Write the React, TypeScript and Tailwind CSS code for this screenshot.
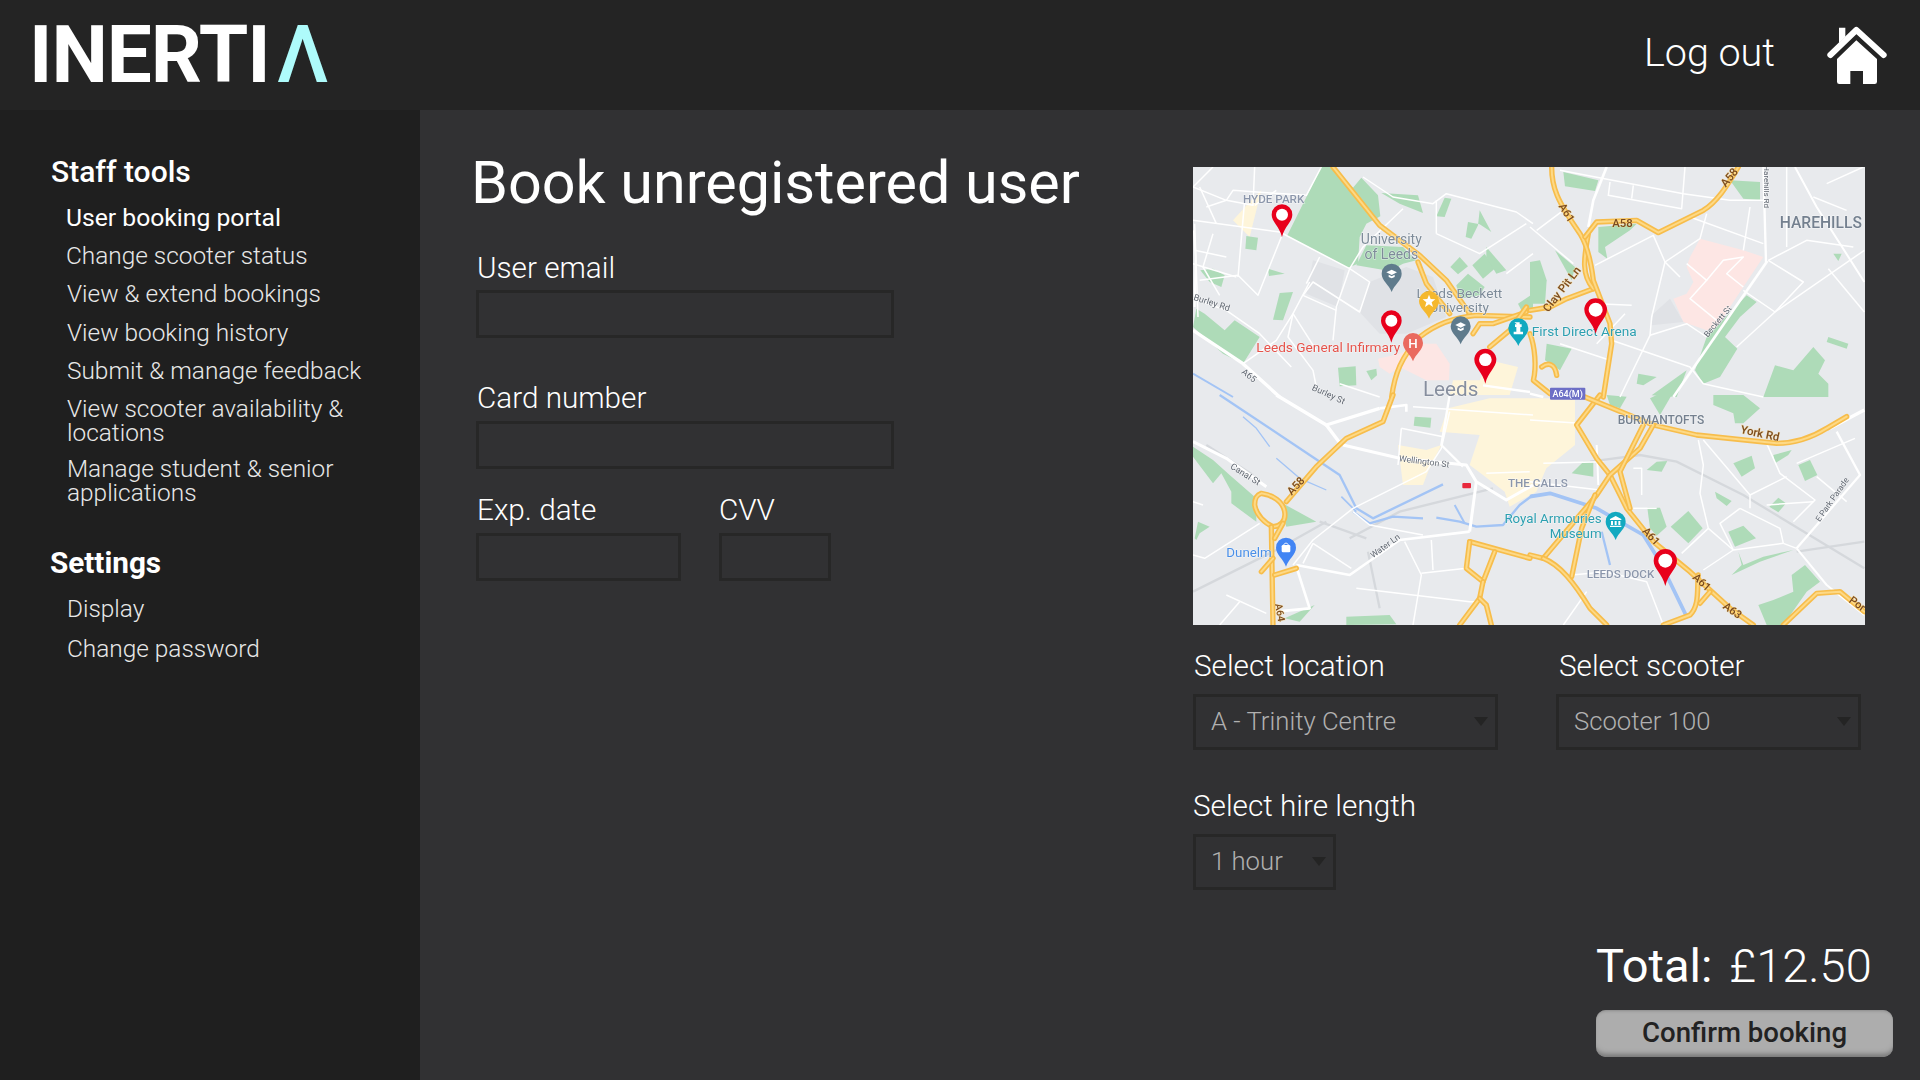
import React from "react";

const Q: Record<number, string> = {
  1: "translate(0 0)",
  2: "translate(1011 0)",
  3: "translate(0 684)",
  4: "translate(1011 684)",
};

const parks: Record<number, string[]> = {
  1: [
    "385,0 420,0 480,62 505,32 555,85 562,148 520,170 500,210 495,290 465,302 282,207",
    "565,78 675,85 690,138 620,110",
    "755,92 775,95 755,150 730,148",
    "860,130 895,195 860,172 825,165 818,210 835,215 855,175",
    "520,235 630,240 670,280 630,290 590,312 490,295",
    "160,207 195,212 190,250 157,245",
    "225,305 275,320 228,327",
    "22,310 60,305 95,325 85,360 50,345",
    "260,378 300,375 270,460 240,458",
    "0,480 10,425 35,440 95,490 125,460 200,510 150,590 90,560",
    "435,602 488,598 490,655 440,658",
    "520,612 550,605 552,625 535,640",
    "772,300 800,270 825,298 795,322",
    "838,295 875,260 905,305 870,335",
    "880,240 940,310 910,320 880,270",
    "790,355 825,320 875,360 860,385 800,395",
    "975,410 1020,380 1020,425 985,430",
  ],
  2: [
    "100,15 205,40 195,72 105,58",
    "600,40 690,45 690,100 640,95",
    "205,180 320,170 300,190 225,240 232,275 205,255",
    "75,250 135,300 125,340",
    "0,285 30,280 50,340 45,410 0,410",
    "50,530 125,545 90,610 45,580",
    "910,260 935,260 925,282",
    "895,510 955,530 950,545 890,525",
    "650,385 680,405 630,450 585,510 622,545 570,630 520,650 495,610 530,510",
    "735,595 790,610 850,540 885,580 865,620 895,650 895,690 700,690",
    "325,620 380,630 340,655 320,650",
    "365,685 470,610 440,690",
  ],
  3: [
    "0,155 60,195 110,240 190,310 190,380 115,325 115,290 85,235 60,265 0,185",
    "260,320 370,380 280,395",
    "5,430 15,380 50,395 20,415 10,435",
    "665,65 715,68 712,98 662,92",
    "460,690 460,665 590,660 610,688",
    "275,670 365,630 320,680",
  ],
  4: [
    "550,0 640,0 690,40 640,85 615,85 610,55 550,30",
    "230,0 290,5 270,40 240,30",
    "380,0 425,0 390,60 360,10",
    "730,180 785,165 775,180 735,205",
    "610,205 665,182 675,220 635,245",
    "805,210 840,195 862,240 825,258",
    "380,200 412,198 395,230 350,225",
    "125,235 160,200 190,200 190,245",
    "555,290 605,318 590,333 560,310",
    "718,335 745,308 768,325 745,352",
    "595,410 640,392 678,430 615,455",
    "352,338 390,338 410,395 380,422 360,400",
    "422,395 475,348 518,400 475,445",
    "625,470 640,510 700,485 790,465 690,500 605,540 635,510",
    "685,630 730,615 790,590 785,540 825,510 870,560 830,590 760,690 710,690",
  ],
};

const thin: Record<number, string[]> = {
  1: [
    "M0 60L60 0", "M0 60L100 100L180 115L185 0", "M100 100L120 70L340 85L385 0", "M20 60L70 170",
    "M0 160L260 195L470 305L530 345L500 435L360 345L330 385L430 430", "M265 210L195 385L135 325L20 340",
    "M60 200L30 300L80 385", "M5 250L100 270", "M0 290L130 330", "M155 100L135 330",
    "M510 30L600 90L720 110L760 80L970 135L1020 170", "M630 125L510 240L470 305", "M470 305L430 420L420 520",
    "M350 345L300 440L285 510L360 610L370 660", "M300 440L370 550", "M730 200L730 100", "M730 200L860 260L1000 170",
    "M940 320L1020 260", "M150 590L250 520L300 440", "M0 395L100 430L200 500L295 600", "M440 650L560 690",
    "M380 270L340 350", "M40 120L100 100", "M185 115L250 70", "M5 170L15 450",
  ],
  2: [
    "M20 190L100 130", "M0 180L130 290", "M240 45L235 85L455 125L465 0", "M310 55L305 95", "M90 10L460 80L600 100L700 100",
    "M660 120L640 250", "M480 150L700 230", "M530 140L510 215L405 285L365 450L360 505L270 690", "M195 295L370 205L405 285L450 330",
    "M200 410L305 415", "M285 440L200 530", "M360 505L470 470L530 510", "M470 290L530 340L480 395L560 460",
    "M530 340L580 280L640 270L590 320L640 360", "M715 280L830 220L970 240", "M715 280L820 345L735 435L640 370",
    "M735 435L1003 250", "M895 305L1003 435", "M770 0L770 240", "M890 50L1000 0", "M850 90L950 130", "M620 540L735 435",
    "M245 520L480 600L520 650L700 690", "M90 530L240 580",
  ],
  3: [
    "M770 50L745 160L700 230L480 340L360 435L300 510", "M100 600L220 655", "M140 620L80 690", "M360 445L475 520", "M360 445L330 505",
    "M490 580L830 620L850 620", "M635 440L685 540L660 690", "M715 435L720 525", "M685 535L820 520", "M625 100L615 210", "M625 100L750 125",
    "M660 35L1020 60", "M880 235L1010 230", "M0 480L35 490L200 385", "M0 320L30 330", "M480 350L530 390L690 420",
  ],
  4: [
    "M505 135L520 210L510 295L535 400L610 465", "M520 135L660 300L660 340", "M710 145L750 235L855 315L790 380", "M660 300L770 245",
    "M850 320L710 330", "M535 400L455 475", "M520 525L610 465L760 445", "M630 340L570 385L610 465", "M630 340L750 400L760 445",
    "M800 460L760 445", "M800 205L975 130", "M860 245L950 320", "M0 75L150 85", "M40 205L220 200", "M0 260L210 285",
    "M310 340L380 340", "M310 220L335 220L335 300", "M225 530L350 560L400 690", "M125 540L230 530", "M100 690L170 590",
  ],
};

const major: [number, string, number][] = [
  [1, "M0 490L150 590L260 690", 10],
  [1, "M3 190L8 270L5 420", 6],
  [1, "M870 655L1011 675", 7],
  [2, "M0 680L40 690", 7],
  [2, "M230 0L190 100L175 180", 8],
  [2, "M700 0L708 285", 7],
  [2, "M712 282L430 690", 8],
  [2, "M795 0L860 120L1003 345", 6],
  [3, "M0 140L100 190L220 275", 9],
  [3, "M250 0L400 90L560 40", 10],
  [3, "M450 150L620 190L820 210L850 260L940 315L1020 270", 9],
  [3, "M850 260L830 410", 9],
  [3, "M830 410L620 435L470 540L310 510", 8],
  [3, "M310 515L350 640L250 650", 8],
  [3, "M400 90L445 150", 10],
  [3, "M560 40L640 30L640 50", 8],
  [3, "M770 0L745 150L810 215", 7],
  [4, "M800 460L990 240L920 110", 7],
  [4, "M800 460L890 570L1003 660", 6],
  [4, "M900 100L1003 45", 10],
  [4, "M200 150L205 270", 6],
];

const yellow: [number, string][] = [
  [1, "M420 0L560 175L680 265L760 340L830 440"],
  [1, "M675 285L700 350L770 440"],
  [1, "M596 690C605 620 625 570 680 510C730 470 790 450 850 445L1011 450"],
  [1, "M840 500L860 470L900 470L1000 435"],
  [2, "M0 430L60 420L110 395L190 365"],
  [2, "M190 365C150 320 165 260 175 200"],
  [2, "M65 0C65 60 80 100 150 200C175 240 185 300 190 340L240 470L245 530L220 690"],
  [2, "M165 210L200 165L320 160L385 197L520 130C560 105 590 60 625 0"],
  [2, "M0 500C15 540 20 600 10 640L60 680"],
  [2, "M35 600C55 585 75 590 80 625"],
  [1, "M890 540L950 490L1000 420"],
  [4, "M210 0L140 90L200 190L240 240L290 340L370 440L480 530L600 640L670 690"],
  [4, "M150 0L370 90L500 120L740 145C800 145 850 125 890 100L950 65"],
  [4, "M370 90L330 160L240 240L200 300L40 490L0 480"],
  [4, "M125 545L155 400L195 300"],
  [4, "M340 90L270 230L300 340"],
  [4, "M40 490C90 510 130 560 180 640L230 690"],
  [4, "M505 540C500 580 510 630 480 660L400 690"],
  [4, "M540 590L510 625"],
  [4, "M760 690L860 595L930 590L1003 650"],
  [3, "M600 0L570 80L460 130L370 215L280 320"],
  [3, "M205 295C240 300 270 320 275 350C280 380 260 395 240 395C215 385 190 360 185 330C185 310 190 300 205 295Z"],
  [3, "M235 395L240 690"],
  [3, "M270 385L245 430"],
  [3, "M205 530L240 490"],
  [3, "M245 540L310 520"],
  [3, "M830 440L1011 490"],
  [3, "M830 440L820 520L870 560L905 470"],
  [3, "M870 560L860 610L800 690"],
  [3, "M860 610L880 630L895 690"],
];

const water: [number, string, number][] = [
  [3, "M80 0L350 180L440 240L490 340L540 370L750 268", 7],
  [3, "M480 350L530 385L600 365L690 370M730 368L800 380L850 395L930 390L980 330L1020 300", 7],
  [3, "M785 330L815 385", 6],
  [3, "M150 65L190 100L230 155", 4],
  [3, "M250 190L320 250L400 285", 4],
  [3, "M445 305L490 350", 5],
  [1, "M0 620L120 690", 6],
  [4, "M0 305L60 295L200 340L340 420L390 500L470 665", 11],
  [4, "M215 410L240 510", 7],
];

const rail: [number, string][] = [
  [4, "M180 200L330 180L440 200L640 300L1003 520"],
  [3, "M470 430L620 350L900 280"],
  [3, "M0 590L240 470L400 380"],
  [3, "M380 380L520 430"],
  [3, "M525 470L560 640"],
  [3, "M40 150L180 240"],
  [4, "M1003 440L800 470"],
];

function Label({ x, y, t, s, c, r = 0, w = 400, a = "start", halo = "#ffffff" }: { x: number; y: number; t: string; s: number; c: string; r?: number; w?: number; a?: "start" | "middle" | "end"; halo?: string }) {
  return (
    <text
      x={x}
      y={y}
      fontSize={s}
      fill={c}
      fontWeight={w}
      textAnchor={a}
      transform={r ? `rotate(${r} ${x} ${y})` : undefined}
      stroke={halo}
      strokeOpacity={0.6}
      strokeWidth={3}
      paintOrder="stroke"
    >
      {t}
    </text>
  );
}

function pinPath(cx: number, cy: number, r: number, tip: number) {
  return `M${cx} ${tip}C${cx - r * 0.25} ${cy + r * 1.1} ${cx - r} ${cy + r * 0.7} ${cx - r} ${cy}A${r} ${r} 0 1 1 ${cx + r} ${cy}C${cx + r} ${cy + r * 0.7} ${cx + r * 0.25} ${cy + r * 1.1} ${cx} ${tip}Z`;
}

function Red({ x, y, r, tip, d }: { x: number; y: number; r: number; tip: number; d: number }) {
  return (
    <g>
      <path d={pinPath(x, y, r, tip)} fill="#e8001c" />
      <circle cx={x} cy={y} r={d} fill="#ffffff" />
    </g>
  );
}

function Poi({ x, y, tip, c, children }: { x: number; y: number; tip: number; c: string; children?: React.ReactNode }) {
  return (
    <g>
      <path d={pinPath(x, y, 30, tip)} fill={c} />
      {children}
    </g>
  );
}

function School({ x, y }: { x: number; y: number }) {
  return (
    <g fill="#ffffff">
      <path d={`M${x - 16} ${y - 4}L${x} ${y - 12}L${x + 16} ${y - 4}L${x} ${y + 4}Z`} />
      <path d={`M${x - 9} ${y + 3}L${x} ${y + 8}L${x + 9} ${y + 3}V${y + 10}L${x} ${y + 14}L${x - 9} ${y + 10}Z`} />
    </g>
  );
}

const brown = "#7a4a1f";
const pale = "#fdd986";

function MapDrawing() {
  return (
    <svg viewBox="0 0 2016 1374" className="block w-full h-full blur-[0.5px]" preserveAspectRatio="none">
      <rect width="2016" height="1374" fill="#e8eaed" />
      <g transform={Q[1]}>
        <polygon points="555,575 620,560 690,530 730,530 770,590 768,640 700,640 620,600 590,620 560,600" fill="#fde6e4" />
        <polygon points="360,280 455,310 435,420 340,380" fill="#e0e2e6" />
        <polygon points="530,345 640,300 720,330 760,450 640,500 560,500 500,435" fill="#e0e2e6" />
      </g>
      <g transform={Q[2]}>
        <polygon points="510,215 640,250 700,270 640,360 560,480 530,490 460,465 430,395 470,380 490,345 470,300 480,270" fill="#fde6e4" />
        <polygon points="420,395 460,465 365,475 370,440" fill="#e0e2e6" />
      </g>
      <g transform={Q[3]} fill="#fef5da">
        <polygon points="765,40 890,10 1146,10 1146,150 1060,220 1030,290 950,335 935,290 870,240 830,210 860,120 740,110" />
        <polygon points="615,150 700,165 745,150 705,230 690,270 630,270" />
      </g>
      <g transform={Q[1]} fill="#fef5da">
        <polygon points="780,640 860,640 890,580 975,600 950,684 770,684" />
        <polygon points="120,160 165,110 205,70 170,210 140,180" />
      </g>
      {[1, 2, 3, 4].map((q) => (
        <g key={q} transform={Q[q]} fill="#aedbb8">
          {parks[q].map((p, i) => (
            <polygon key={i} points={p} />
          ))}
        </g>
      ))}
      {rail.map(([q, d], i) => (
        <path key={i} transform={Q[q]} d={d} fill="none" stroke="#d5d8dc" strokeWidth={7} />
      ))}
      {water.map(([q, d, w], i) => (
        <path key={i} transform={Q[q]} d={d} fill="none" stroke="#a3c4f5" strokeWidth={w} strokeLinejoin="round" />
      ))}
      {[1, 2, 3, 4].map((q) => (
        <g key={q} transform={Q[q]} fill="none" stroke="#ffffff" strokeWidth={4.5} strokeLinejoin="round">
          {thin[q].map((d, i) => (
            <path key={i} d={d} />
          ))}
        </g>
      ))}
      {major.map(([q, d, w], i) => (
        <path key={i} transform={Q[q]} d={d} fill="none" stroke="#ffffff" strokeWidth={w} strokeLinejoin="round" />
      ))}
      {yellow.map(([q, d], i) => (
        <g key={i} transform={Q[q]} fill="none" strokeLinejoin="round" strokeLinecap="round">
          <path d={d} stroke="#f7bd4b" strokeWidth={16} />
          <path d={d} stroke={pale} strokeWidth={6} />
        </g>
      ))}

      <Label x={150} y={108} t="HYDE PARK" s={35} c="#8b96ab" w={500} />
      <Label x={595} y={230} t="University" s={42} c="#7d8b99" a="middle" />
      <Label x={595} y={275} t="of Leeds" s={42} c="#7d8b99" a="middle" />
      <Label x={928} y={392} t="Leeds Beckett" s={41} c="#7d8b99" a="end" />
      <Label x={888} y={436} t="University" s={41} c="#7d8b99" a="end" />
      <Label x={190} y={554} t="Leeds General Infirmary" s={41} c="#e5534b" />
      <Label x={690} y={688} t="Leeds" s={62} c="#868e9e" />
      <Label x={1016} y={506} t="First Direct Arena" s={41} c="#2c9fb0" />
      <Label x={1760} y={184} t="HAREHILLS" s={47} c="#74808f" w={500} />
      <Label x={0} y={398} t="Burley Rd" s={27} c="#5f6670" r={18} />
      <Label x={144} y={618} t="A65" s={27} c="#5f6670" r={38} />
      <Label x={355} y={668} t="Burley St" s={27} c="#5f6670" r={25} />
      <Label x={1066} y={437} t="Clay Pit Ln" s={34} c={brown} r={-52} w={500} halo={pale} />
      <Label x={1096} y={118} t="A61" s={33} c={brown} r={58} w={500} halo={pale} />
      <Label x={1258} y={180} t="A58" s={34} c={brown} w={500} halo={pale} />
      <Label x={1598} y={62} t="A58" s={34} c={brown} r={-50} w={500} halo={pale} />
      <Label x={1712} y={-5} t="Harehills Rd" s={24} c="#5f6670" r={90} />
      <Label x={1544} y={512} t="Beckett St" s={25} c="#5f6670" r={-50} />
      <rect x={1071} y={662} width={106} height={36} rx={3} fill="#6d6fc6" />
      <Label x={1124} y={690} t="A64(M)" s={27} c="#ffffff" a="middle" w={500} halo="#6d6fc6" />
      <Label x={1274} y={771} t="BURMANTOFTS" s={36} c="#74808f" w={500} />
      <Label x={1641} y={798} t="York Rd" s={34} c={brown} r={12} w={500} halo={pale} />
      <Label x={617} y={883} t="Wellington St" s={26} c="#646b75" r={7} />
      <Label x={945} y={960} t="THE CALLS" s={35} c="#8b96ab" w={500} />
      <Label x={110} y={903} t="Canal St" s={27} c="#5f6670" r={32} />
      <Label x={296} y={986} t="A58" s={33} c={brown} r={-47} w={500} halo={pale} />
      <Label x={1346} y={1094} t="A61" s={33} c={brown} r={46} w={500} halo={pale} />
      <Label x={1497} y={1234} t="A61" s={33} c={brown} r={42} w={500} halo={pale} />
      <Label x={1588} y={1322} t="A63" s={33} c={brown} r={36} w={500} halo={pale} />
      <Label x={1966} y={1304} t="Por" s={33} c={brown} r={36} w={500} halo={pale} />
      <Label x={246} y={1312} t="A64" s={30} c={brown} r={80} w={500} halo={pale} />
      <Label x={540} y={1174} t="Water Ln" s={26} c="#5f6670" r={-36} />
      <Label x={1880} y={1066} t="E Park Parade" s={25} c="#5f6670" r={-55} />
      <Label x={1226} y={1068} t="Royal Armouries" s={40} c="#2c9fb0" a="end" />
      <Label x={1226} y={1112} t="Museum" s={40} c="#2c9fb0" a="end" />
      <Label x={1181} y={1234} t="LEEDS DOCK" s={35} c="#8b96ab" w={500} />
      <Label x={100} y={1170} t="Dunelm" s={40} c="#4a8fe8" />
      <rect x={808} y={948} width={26} height={16} rx={3} fill="#e8283c" />

      <Poi x={596} y={320} tip={375} c="#5f7b8c"><School x={596} y={320} /></Poi>
      <Poi x={803} y={478} tip={532} c="#5f7b8c"><School x={803} y={478} /></Poi>
      <Poi x={660} y={528} tip={583} c="#ea6a5f">
        <text x={660} y={542} fontSize={40} fill="#ffffff" textAnchor="middle" fontWeight={500}>H</text>
      </Poi>
      <Poi x={708} y={402} tip={455} c="#f5b82e">
        <polygon points="708,383 713,396 727,397 716,406 720,420 708,412 696,420 700,406 689,397 703,396" fill="#ffffff" />
      </Poi>
      <Poi x={976} y={484} tip={537} c="#12a9c0">
        <path d="M968 466h16v6h6v8h-4v14h8v8h-28v-8h8v-14h-4v-8h6z" transform="translate(-4 0)" fill="#ffffff" />
      </Poi>
      <Poi x={1268} y={1064} tip={1119} c="#12a9c0">
        <path d="M1268 1047l17 9v3h-34v-3zM1254 1062h6v12h-6zM1265 1062h6v12h-6zM1276 1062h6v12h-6zM1251 1076h34v4h-34z" fill="#ffffff" />
      </Poi>
      <Poi x={279} y={1142} tip={1199} c="#4285f4">
        <rect x={266} y={1134} width={26} height={22} rx={4} fill="#ffffff" />
        <path d="M272 1136c0-10 14-10 14 0" fill="none" stroke="#ffffff" strokeWidth={3} />
      </Poi>

      <Red x={267} y={143} r={31} tip={210} d={18} />
      <Red x={595} y={461} r={31} tip={527} d={18} />
      <Red x={877} y={578} r={33} tip={650} d={19} />
      <Red x={1208} y={428} r={34} tip={500} d={21} />
      <Red x={1417} y={1181} r={35} tip={1257} d={21} />
    </svg>
  );
}

function HomeIcon() {
  return (
    <svg viewBox="680 70 180 180" className="w-[60px] h-[60px]" fill="#ffffff">
      <path d="M690 160L768 85L850 160" fill="none" stroke="#ffffff" strokeWidth={18} strokeLinecap="round" strokeLinejoin="round" />
      <path d="M716 78H735V106L716 124Z" />
      <path d="M710 172L768 116L830 172V240Q830 247 823 247H788V208H750V247H717Q710 247 710 240Z" />
    </svg>
  );
}

function Field({ label, w, className = "", inputClass = "mt-[4px] ml-[-1px]" }: { label: string; w: string; className?: string; inputClass?: string }) {
  return (
    <div className={className}>
      <div className="text-[29.7px] font-light leading-[36px] text-white">{label}</div>
      <input type="text" aria-label={label} className={`${inputClass} block h-[48px] ${w} border-[3px] border-[#272727] bg-transparent outline-none`} />
    </div>
  );
}

function Picker({ label, value, w, className = "", labelClass = "" }: { label: string; value: string; w: string; className?: string; labelClass?: string }) {
  return (
    <div className={className}>
      <div className={`text-[29.7px] font-light leading-[36px] text-white ${labelClass}`}>{label}</div>
      <div className={`relative mt-[10px] ${w}`}>
        <select className="block h-[56px] w-full appearance-none border-[3px] border-[#272727] bg-transparent pb-[2px] pl-[15px] text-[25.7px] font-light text-[#b0b0b0] outline-none" defaultValue={value}>
          <option value={value}>{value}</option>
        </select>
        <span className="absolute right-[10px] top-[23px] h-0 w-0 border-x-[7px] border-t-[9px] border-x-transparent border-t-[#242424]" />
      </div>
    </div>
  );
}

const links = [
  { t: "Change scooter status", c: "mt-[14px] ml-[66px]" },
  { t: "View & extend bookings", c: "mt-[14px] ml-[67px]" },
  { t: "View booking history", c: "mt-[15px] ml-[67px]" },
  { t: "Submit & manage feedback", c: "mt-[14px] ml-[67px]" },
  { t: "View scooter availability & locations", c: "mt-[14px] ml-[67px] w-[300px]" },
  { t: "Manage student & senior applications", c: "mt-[12px] ml-[67px] w-[300px]" },
];

export default function App() {
  return (
    <div className="flex h-[1080px] w-[1920px] flex-col overflow-hidden bg-[#313133] font-['Roboto',sans-serif] text-white">
      <header className="flex h-[110px] shrink-0 items-center bg-[#242424] pl-[29px] pr-[33px]">
        <div className="flex items-baseline text-[80px] font-bold leading-[110px] tracking-[-1px] text-white">
          <span>INERTI</span>
          <span className="ml-[7px] font-medium text-[#aefbfb]">Λ</span>
        </div>
        <div className="ml-auto mt-[-4px] text-[39.5px] font-light leading-[48px]">Log out</div>
        <div className="ml-[52px]"><HomeIcon /></div>
      </header>
      <div className="flex min-h-0 flex-1">
        <aside className="w-[420px] shrink-0 bg-[#1f1f1f] pt-[45px] text-[24.4px] font-light leading-[24px] text-[#e8e8e8]">
          <div className="ml-[51px] text-[30px] font-medium leading-[34px] text-white">Staff tools</div>
          <div className="ml-[66px] mt-[17px] text-[24.7px] font-normal text-white">User booking portal</div>
          {links.map((l) => (
            <div key={l.t} className={l.c}>{l.t}</div>
          ))}
          <div className="ml-[50px] mt-[41px] text-[29.7px] font-bold leading-[34px] text-white">Settings</div>
          <div className="ml-[67px] mt-[17px]">Display</div>
          <div className="ml-[67px] mt-[16px]">Change password</div>
        </aside>
        <main className="flex min-w-0 flex-1">
          <section className="w-[773px] shrink-0 pl-[51px]">
            <h1 className="mt-[38px] text-[59.3px] font-normal leading-[70px]">Book unregistered user</h1>
            <div className="ml-[6px] mt-[32px]">
              <Field label="User email" w="w-[418px]" />
              <Field label="Card number" w="w-[418px]" className="mt-[42px]" inputClass="mt-[5px] ml-[-1px]" />
              <div className="mt-[23px] flex">
                <Field label="Exp. date" w="w-[205px]" className="w-[243px]" inputClass="mt-[5px] ml-[-1px]" />
                <Field label="CVV" w="w-[112px]" className="ml-[-1px]" inputClass="mt-[5px]" />
              </div>
            </div>
          </section>
          <section className="flex-1">
            <div className="mt-[57px] h-[458px] w-[672px]">
              <MapDrawing />
            </div>
            <div className="mt-[23px] flex">
              <Picker label="Select location" value="A - Trinity Centre" w="w-[305px]" className="w-[363px]" labelClass="ml-[1px]" />
              <Picker label="Select scooter" value="Scooter 100" w="w-[305px]" labelClass="ml-[3px]" />
            </div>
            <Picker label="Select hire length" value="1 hour" w="w-[143px]" className="mt-[38px]" />
            <div className="ml-[403px] mt-[48px] flex text-[47px] leading-[56px]">
              <span className="font-normal">Total:</span>
              <span className="ml-[17px] font-light">£12.50</span>
            </div>
            <button type="button" className="ml-[403px] mt-[16px] block h-[47px] w-[297px] rounded-[10px] bg-[#adadad] pb-[2px] text-[27.6px] font-medium leading-[45px] text-[#222222] shadow-[inset_0_-6px_5px_-3px_#777777,inset_0_3px_3px_-2px_#8a8a8a]">
              Confirm booking
            </button>
          </section>
        </main>
      </div>
    </div>
  );
}
